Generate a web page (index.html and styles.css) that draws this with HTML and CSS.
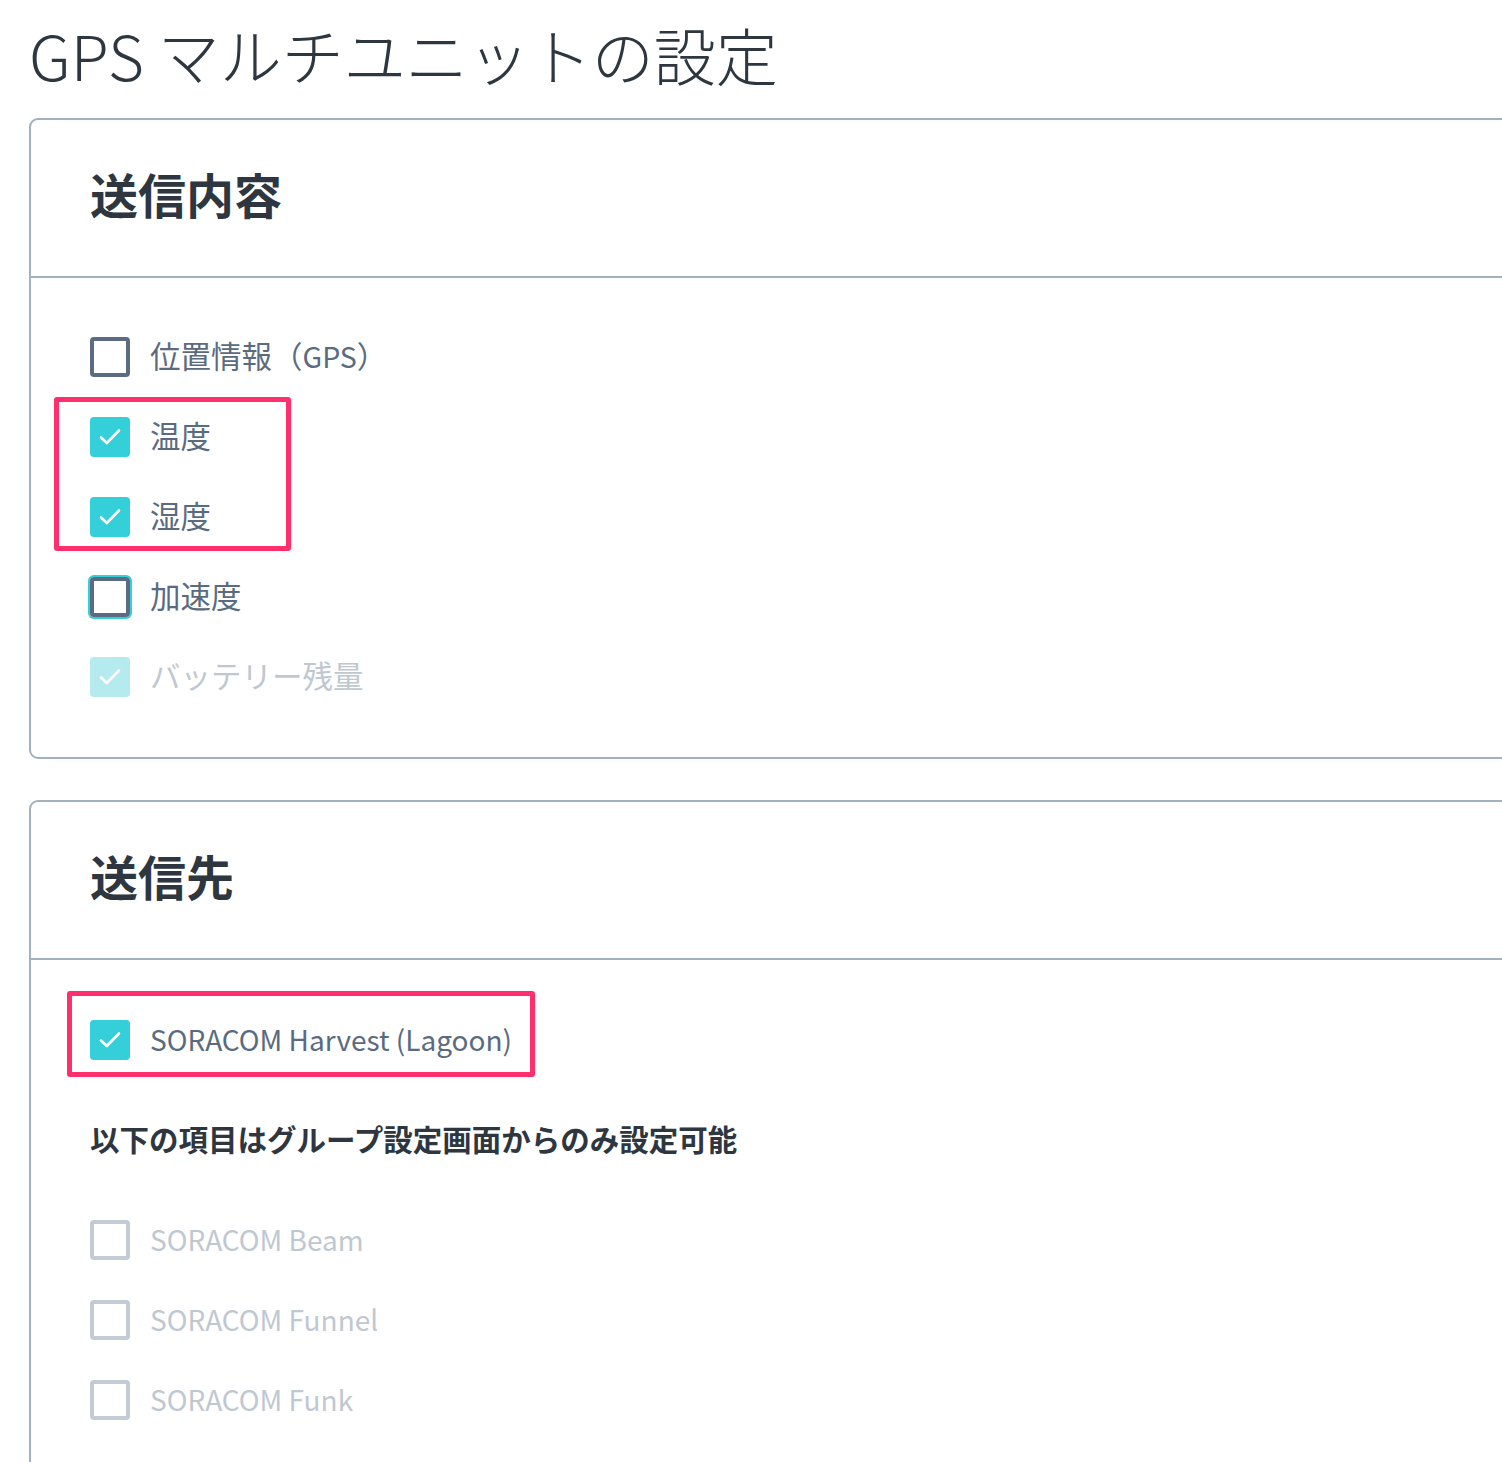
FILE: index.html
```html
<!DOCTYPE html>
<html lang="ja">
<head>
<meta charset="utf-8">
<title>GPS マルチユニットの設定</title>
<link rel="stylesheet" href="styles.css">
</head>
<body>
<div class="page">
  <h1 class="title">GPS マルチユニットの設定</h1>

  <section class="card">
    <div class="card-header"><h2>送信内容</h2></div>
    <div class="card-body">
      <label class="row">
        <span class="box"></span><span class="label">位置情報（<span class="latin">GPS</span>）</span>
      </label>
      <div class="group group-a">
        <span class="mark mark-a"></span>
        <label class="row">
          <span class="box checked"><svg viewBox="0 0 40 40"><path d="M11 20.5 L16.8 26 L29 13.5"/></svg></span><span class="label">温度</span>
        </label>
        <label class="row">
          <span class="box checked"><svg viewBox="0 0 40 40"><path d="M11 20.5 L16.8 26 L29 13.5"/></svg></span><span class="label">湿度</span>
        </label>
      </div>
      <label class="row">
        <span class="box focused"></span><span class="label">加速度</span>
      </label>
      <label class="row disabled">
        <span class="box checked"><svg viewBox="0 0 40 40"><path d="M11 20.5 L16.8 26 L29 13.5"/></svg></span><span class="label">バッテリー残量</span>
      </label>
    </div>
  </section>

  <section class="card card-last">
    <div class="card-header"><h2>送信先</h2></div>
    <div class="card-body">
      <div class="group group-b">
        <span class="mark mark-b"></span>
        <label class="row">
          <span class="box checked"><svg viewBox="0 0 40 40"><path d="M11 20.5 L16.8 26 L29 13.5"/></svg></span><span class="label en">SORACOM Harvest (Lagoon)</span>
        </label>
      </div>
      <p class="note">以下の項目はグループ設定画面からのみ設定可能</p>
      <div class="list">
        <label class="row disabled">
          <span class="box"></span><span class="label en">SORACOM Beam</span>
        </label>
        <label class="row disabled">
          <span class="box"></span><span class="label en">SORACOM Funnel</span>
        </label>
        <label class="row disabled">
          <span class="box"></span><span class="label en">SORACOM Funk</span>
        </label>
      </div>
    </div>
  </section>
</div>
</body>
</html>
```

FILE: styles.css
```css
html, body {
  margin: 0;
  padding: 0;
  background: #ffffff;
  overflow: hidden;
}

body {
  font-family: "Noto Sans CJK JP", "Noto Sans", sans-serif;
  color: #2e363f;
}

.page {
  padding: 18px 0 0 29px;
  overflow: hidden;
}

.title {
  margin: 0 0 27px 0;
  font-size: 62px;
  line-height: 73px;
  font-weight: 300;
  color: #2e363f;
  letter-spacing: 0;
}

.card {
  border: 2px solid #a3b0bd;
  border-radius: 9px;
  margin-right: -40px;
  margin-bottom: 41px;
  background: #fff;
}

.card-header {
  padding: 43px 58px 53px 59px;
  border-bottom: 2px solid #a3b0bd;
}

.card-header h2 {
  margin: 0;
  font-size: 48px;
  line-height: 60px;
  font-weight: 700;
  color: #2e363f;
}

.card-body {
  padding: 59px 58px 60px 59px;
  display: flex;
  flex-direction: column;
  gap: 40px;
}

.card-last .card-body {
  padding-top: 60px;
  padding-bottom: 120px;
  gap: 0;
}

.group {
  position: relative;
  display: flex;
  flex-direction: column;
  gap: 40px;
}

.mark {
  position: absolute;
  border: 5px solid #ff2f6e;
  border-radius: 3px;
  box-sizing: border-box;
}

.mark-a {
  left: -36px;
  top: -20px;
  width: 237px;
  bottom: -14px;
}

.mark-b {
  left: -23px;
  top: -29px;
  width: 468px;
  bottom: -17px;
}

.row {
  display: flex;
  align-items: center;
  gap: 20px;
  height: 40px;
}

.box {
  width: 40px;
  height: 40px;
  box-sizing: border-box;
  border: 4px solid #5b6c82;
  border-radius: 4px;
  flex: none;
  display: flex;
  align-items: center;
  justify-content: center;
}

.box.checked {
  border: none;
  background: #34cfd9;
}

.box svg {
  width: 40px;
  height: 40px;
  display: block;
}

.box svg path {
  fill: none;
  stroke: #ffffff;
  stroke-width: 2.6;
  stroke-linecap: round;
  stroke-linejoin: round;
}

.box.focused {
  box-shadow: 0 0 0 2px #34cfd9;
}

.label {
  font-size: 30.5px;
  line-height: 40px;
  padding-bottom: 4px;
  color: #5a6b80;
  white-space: nowrap;
}

.label .latin {
  font-size: 28.5px;
}

.label.en {
  font-size: 28px;
  padding-bottom: 2px;
}

.row.disabled .label {
  color: #bfc8d1;
}

.row.disabled .box {
  border-color: #c3ccd5;
}

.row.disabled .box.checked {
  background: #b5eaee;
}

.note {
  margin: 58px 0 62px 0;
  font-size: 29.5px;
  line-height: 40px;
  font-weight: 700;
  color: #2e363f;
}

.list {
  display: flex;
  flex-direction: column;
  gap: 40px;
}
```
